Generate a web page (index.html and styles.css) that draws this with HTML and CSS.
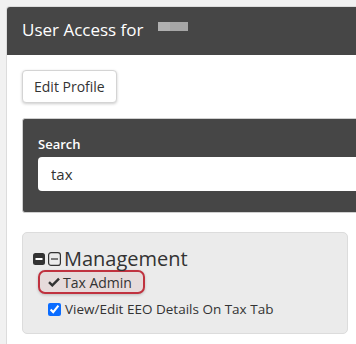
FILE: index.html
```html
<!DOCTYPE html>
<html lang="en">
<head>
    <meta charset="UTF-8">
    <meta name="viewport" content="width=device-width, initial-scale=1.0">
    <title>User Access</title>
    <link rel="stylesheet" href="styles.css">
</head>
<body>
    <div class="panel">
        <div class="panel-heading">
            <span>User Access for</span>
            <span class="redacted"></span>
        </div>
        <div class="panel-body">
            <button class="btn">Edit Profile</button>

            <div class="search-box">
                <label class="search-label" for="search">Search</label>
                <input id="search" class="search-input" type="text" value="tax">
            </div>

            <div class="tree">
                <div class="tree-title">
                    <svg class="icon" width="12" height="12" viewBox="0 0 12 12">
                        <rect x="0" y="0" width="12" height="12" rx="2.5" fill="#333"/>
                        <rect x="2.5" y="5" width="7" height="2" fill="#fff"/>
                    </svg>
                    <svg class="icon" width="13" height="14" viewBox="0 0 13 14">
                        <rect x="0.6" y="0.6" width="11.8" height="12.8" rx="2.5" fill="none" stroke="#333" stroke-width="1.2"/>
                        <rect x="3" y="6.4" width="7" height="1.2" fill="#333"/>
                    </svg>
                    <span>Management</span>
                </div>
                <div class="tree-item highlight">
                    <svg class="check" width="12" height="10" viewBox="0 0 12 10">
                        <path d="M1 5.2 L4.3 8.4 L11 1.6" fill="none" stroke="#333" stroke-width="2.4"/>
                    </svg>
                    <span>Tax Admin</span>
                </div>
                <div class="tree-item">
                    <input type="checkbox" class="box" checked>
                    <span>View/Edit EEO Details On Tax Tab</span>
                </div>
            </div>
        </div>
    </div>
</body>
</html>
```

FILE: styles.css
```css
* {
    margin: 0;
    padding: 0;
    box-sizing: border-box;
    font-family: 'Open Sans', 'Noto Sans', sans-serif;
}

body {
    background-color: #f1f1f1;
    padding: 6px 0 0 6px;
    overflow: hidden;
    height: 344px;
}

.panel {
    width: 350px;
    height: 338px;
    background-color: #fff;
    border: 1px solid #dcdcdc;
    border-right: none;
    border-bottom: none;
    border-radius: 4px 0 0 0;
    overflow: hidden;
}

.panel-heading {
    height: 48px;
    background-color: #464646;
    color: #fff;
    font-size: 17px;
    display: flex;
    align-items: center;
    padding-left: 15px;
    padding-bottom: 3px;
}

.redacted {
    display: inline-block;
    width: 30px;
    height: 9px;
    margin-left: 14px;
    margin-top: -6px;
    background: linear-gradient(90deg, #b0b0b0 0 40%, #a6a6a6 40% 100%);
}

.panel-body {
    padding: 15px 0 0 15px;
}

.btn {
    height: 33px;
    padding: 0 11px;
    background-color: #fff;
    border: 1px solid #d4d4d4;
    border-radius: 4px;
    box-shadow: 0 1px 3px rgba(0, 0, 0, 0.2);
    font-size: 14px;
    color: #333;
}

.search-box {
    margin-top: 15px;
    margin-right: -20px;
    height: 95px;
    background-color: #464646;
    border-radius: 3px;
    padding: 16px 15px 0 15px;
    border: 1px solid #cfcfcf;
}

.search-label {
    display: block;
    color: #fff;
    font-size: 13px;
    font-weight: 600;
    margin-bottom: 4px;
}

.search-input {
    display: block;
    width: 100%;
    height: 34px;
    border: none;
    border-radius: 4px;
    padding: 0 13px;
    font-size: 15px;
    color: #333;
    outline: none;
}

.tree {
    margin-top: 19px;
    width: 326px;
    height: 102px;
    background-color: #ebebeb;
    border: 1px solid #dcdcdc;
    border-radius: 5px;
    padding: 14px 0 0 10px;
}

.tree-title {
    display: flex;
    align-items: center;
    font-size: 20px;
    color: #333;
    line-height: 24px;
}

.tree-title .icon {
    margin-right: 3px;
}

.tree-item {
    display: flex;
    align-items: center;
    font-size: 13.5px;
    color: #333;
    margin-left: 15px;
}

.tree-item.highlight {
    width: 107px;
    height: 24px;
    margin-left: 5px;
    margin-top: -1px;
    padding-left: 8px;
    background-color: #e6dbdb;
    border: 2px solid #c0323f;
    border-radius: 7px;
    box-shadow: 0 1px 3px rgba(0, 0, 0, 0.2);
    font-size: 14px;
}

.check {
    margin-right: 3px;
}

.box {
    width: 13px;
    height: 13px;
    margin: 0 4px 0 0;
    accent-color: #0a6cff;
}

.tree-item:last-child {
    margin-top: 6px;
}
```
